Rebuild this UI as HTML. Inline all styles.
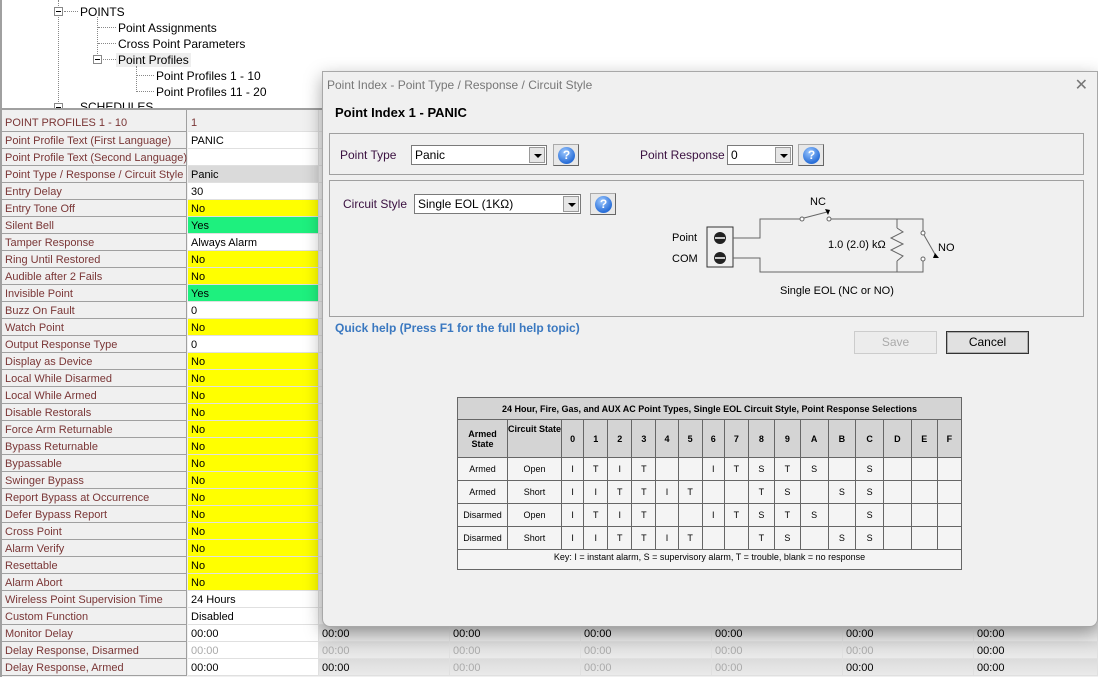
<!DOCTYPE html>
<html><head><meta charset="utf-8">
<style>
*{box-sizing:border-box;margin:0;padding:0}
body{width:1098px;height:677px;position:relative;overflow:hidden;background:#fff;font-family:"Liberation Sans",Arial,sans-serif;font-size:11px;color:#000}
.t{position:absolute;font-size:12px;white-space:nowrap}
.dot{position:absolute;border-color:#888;border-style:dotted;border-width:0}
.pm{position:absolute;width:9px;height:9px;border:1px solid #888;background:#fff}
.pm:after{content:"";position:absolute;left:1px;top:3px;width:5px;height:1px;background:#000}
.grid{position:absolute;left:0;top:108px;width:1098px;height:569px;background:#f0f0f0;border-top:2px solid #a0a0a0;border-left:2px solid #a0a0a0}
.r{position:absolute;left:0;height:17px;width:1098px}
.l{position:absolute;left:2px;top:0;width:185px;height:17px;background:#f0f0f0;border-right:1px solid #a0a0a0;border-bottom:1px solid #a0a0a0;color:#7a3636;padding:3px 0 0 3px;white-space:nowrap}
.v{position:absolute;top:0;height:17px;background:#fff;border-right:1px solid #e0e0e0;border-bottom:1px solid #e0e0e0;padding:3px 0 0 3px;white-space:nowrap}
.y{background:#ffff00}.g{background:#1ef07e}
.dlg{position:absolute;left:322px;top:71px;width:776px;height:556px;background:#f0f0f0;border:1px solid #a8a8a8;border-radius:0 0 8px 8px;box-shadow:0 6px 18px rgba(0,0,0,.35)}
.box{position:absolute;border:1px solid #a0a0a0}
.lab{position:absolute;font-size:12px;color:#3a1040;white-space:nowrap}
.sel{position:absolute;height:20px;background:#fff;border:1px solid #7a7a7a;font-size:12px;padding:2px 0 0 3px}
.sel i{position:absolute;right:1px;top:1px;width:16px;height:16px;background:#e6e6e6;border:1px solid #999}
.sel i:after{content:"";position:absolute;left:4px;top:6px;border:4px solid transparent;border-top:4px solid #000;border-bottom:0}
.hb{position:absolute;width:26px;height:22px;background:#e8e8e8;border:1px solid #aaa;border-bottom-color:#666;border-right-color:#666}
.hb b{position:absolute;left:4px;top:2px;width:17px;height:17px;border-radius:50%;background:radial-gradient(circle at 40% 30%,#9cc8ff,#2a6fd8 70%);color:#fff;font-size:12px;text-align:center;line-height:17px;font-weight:bold}
.btn{position:absolute;height:23px;font-size:12px;text-align:center;line-height:21px;background:#e1e1e1;border:1px solid #adadad}
table{position:absolute;left:457px;top:397px;width:505px;border-collapse:collapse;font-size:9px;background:#f4f4f4}
td{border:1px solid #666;text-align:center;height:23px;padding:0}
th{border:1px solid #666;background:#d4d4d4;font-weight:bold;font-size:9px;padding:0}
</style></head><body>
<div class="dot" style="left:58px;top:0;height:108px;border-left-width:1px"></div>
<div class="pm" style="left:54px;top:7px"></div>
<div class="dot" style="left:64px;top:11px;width:14px;border-top-width:1px"></div>
<div class="t" style="left:80px;top:5px">POINTS</div>
<div class="dot" style="left:97px;top:17px;height:47px;border-left-width:1px"></div>
<div class="dot" style="left:98px;top:27px;width:18px;border-top-width:1px"></div>
<div class="t" style="left:118px;top:21px">Point Assignments</div>
<div class="dot" style="left:98px;top:43px;width:18px;border-top-width:1px"></div>
<div class="t" style="left:118px;top:37px">Cross Point Parameters</div>
<div class="pm" style="left:93px;top:55px"></div>
<div class="dot" style="left:103px;top:59px;width:13px;border-top-width:1px"></div>
<div class="t" style="left:116px;top:53px;background:#eee;padding:0 2px">Point Profiles</div>
<div class="dot" style="left:136px;top:66px;height:26px;border-left-width:1px"></div>
<div class="dot" style="left:137px;top:75px;width:17px;border-top-width:1px"></div>
<div class="t" style="left:156px;top:69px">Point Profiles 1 - 10</div>
<div class="dot" style="left:137px;top:91px;width:17px;border-top-width:1px"></div>
<div class="t" style="left:156px;top:85px">Point Profiles 11 - 20</div>
<div class="pm" style="left:54px;top:103px"></div>
<div class="t" style="left:80px;top:100px">SCHEDULES</div>
<div style="position:absolute;left:0;top:0;width:2px;height:108px;background:#a0a0a0"></div>

<div class="grid"></div>
<div id="rows"></div>
<script>
(function(){
var R=[["POINT PROFILES 1 - 10","1","h"],["Point Profile Text (First Language)","PANIC",""],["Point Profile Text (Second Language)","",""],["Point Type / Response / Circuit Style","Panic","p"],["Entry Delay","30",""],["Entry Tone Off","No","y"],["Silent Bell","Yes","g"],["Tamper Response","Always Alarm",""],["Ring Until Restored","No","y"],["Audible after 2 Fails","No","y"],["Invisible Point","Yes","g"],["Buzz On Fault","0",""],["Watch Point","No","y"],["Output Response Type","0",""],["Display as Device","No","y"],["Local While Disarmed","No","y"],["Local While Armed","No","y"],["Disable Restorals","No","y"],["Force Arm Returnable","No","y"],["Bypass Returnable","No","y"],["Bypassable","No","y"],["Swinger Bypass","No","y"],["Report Bypass at Occurrence","No","y"],["Defer Bypass Report","No","y"],["Cross Point","No","y"],["Alarm Verify","No","y"],["Resettable","No","y"],["Alarm Abort","No","y"],["Wireless Point Supervision Time","24 Hours",""],["Custom Function","Disabled",""],["Monitor Delay","00:00","m"],["Delay Response, Disarmed","00:00","d"],["Delay Response, Armed","00:00","a"]];
var cx=[188,319,450,581,712,843,974,1098];
var pat={m:[0,0,0,0,0,0,0],d:[1,1,1,1,1,1,0],a:[0,0,1,1,1,0,0]};
var h="";
for(var i=0;i<R.length;i++){var tp=i==0?110:115+17*i;var ht=i==0?22:17;
h+='<div class="r" style="top:'+tp+'px;height:'+ht+'px"><div class="l" style="height:'+ht+'px;'+(i==0?'padding-top:7px':'')+'">'+R[i][0]+'</div>';
var k=R[i][2];var n=pat[k]?7:1;
for(var c=0;c<n;c++){var cls="v",st="";
if(k=="y")cls+=" y";if(k=="g")cls+=" g";if(k=="p")st="background:#dadada;";if(k=="h"){st="background:#f0f0f0;color:#7a3636;padding-top:7px;";}
if(pat[k]&&pat[k][c])st+="color:#aaa;";
if(pat[k]&&c>0)st+="background:linear-gradient(#dcdcdc,#eaeaea);";
h+='<div class="'+cls+'" style="left:'+cx[c]+'px;width:'+(cx[c+1]-cx[c])+'px;height:'+ht+'px;'+st+'">'+R[i][1]+'</div>';}
if(!pat[k])h+='<div class="v" style="left:319px;width:779px;height:'+ht+'px;background:#f0f0f0"></div>';
h+='</div>';}
document.getElementById("rows").innerHTML=h;
})();
</script>

<div class="dlg">
 <div style="position:absolute;left:4px;top:6px;font-size:12px;color:#777">Point Index - Point Type / Response / Circuit Style</div>
 <div style="position:absolute;right:9px;top:3px;font-size:16px;color:#777">✕</div>
 <div style="position:absolute;left:12px;top:33px;font-size:13px;font-weight:bold">Point Index 1 - PANIC</div>
 <div class="box" style="left:6px;top:61px;width:755px;height:42px"></div>
 <div class="lab" style="left:17px;top:76px">Point Type</div>
 <div class="sel" style="left:88px;top:73px;width:136px">Panic<i></i></div>
 <div class="hb" style="left:230px;top:72px"><b>?</b></div>
 <div class="lab" style="left:317px;top:76px">Point Response</div>
 <div class="sel" style="left:404px;top:73px;width:66px">0<i></i></div>
 <div class="hb" style="left:475px;top:72px"><b>?</b></div>
 <div class="box" style="left:6px;top:108px;width:755px;height:137px"></div>
 <div class="lab" style="left:20px;top:125px">Circuit Style</div>
 <div class="sel" style="left:91px;top:122px;width:167px">Single EOL (1KΩ)<i></i></div>
 <div class="hb" style="left:267px;top:121px"><b>?</b></div>
 <svg style="position:absolute;left:327px;top:108px" width="320" height="125" font-family="Liberation Sans,Arial" font-size="11">
  <text x="22" y="61">Point</text><text x="22" y="82">COM</text>
  <rect x="57" y="47" width="26" height="40" fill="none" stroke="#333"/>
  <circle cx="70" cy="58" r="6" fill="#222"/><circle cx="70" cy="78" r="6" fill="#222"/>
  <line x1="65" y1="58" x2="75" y2="58" stroke="#fff" stroke-width="1.5"/><line x1="65" y1="78" x2="75" y2="78" stroke="#fff" stroke-width="1.5"/>
  <g stroke="#666" fill="none" stroke-width="1">
   <polyline points="83,58 110,58 110,39 150,39"/>
   <polyline points="83,78 110,78 110,92 273,92 273,81"/>
   <polyline points="181,39 273,39 273,51"/>
   <line x1="154" y1="38" x2="177" y2="32"/>
   <line x1="247" y1="39" x2="247" y2="48"/><line x1="247" y1="81" x2="247" y2="92"/>
   <polyline points="247,48 253,52 241,58 253,64 241,70 253,76 247,81"/>
   <line x1="274" y1="55" x2="286" y2="76"/>
   <circle cx="152" cy="39" r="2" fill="#fff"/><circle cx="179" cy="39" r="2" fill="#fff"/>
   <circle cx="273" cy="53" r="2" fill="#fff"/><circle cx="273" cy="79" r="2" fill="#fff"/>
  </g>
  <polygon points="175,29 180,30 178,35" fill="#000"/><polygon points="285,73 289,78 283,78" fill="#000"/>
  <text x="160" y="25">NC</text><text x="288" y="71">NO</text>
  <text x="178" y="68">1.0 (2.0) kΩ</text>
  <text x="130" y="114">Single EOL (NC or NO)</text>
 </svg>
 <div style="position:absolute;left:12px;top:249px;font-size:12px;font-weight:bold;color:#3a78c0">Quick help (Press F1 for the full help topic)</div>
 <div class="btn" style="left:531px;top:259px;width:83px;color:#aaa;background:#ececec;border-color:#ccc">Save</div>
 <div class="btn" style="left:623px;top:259px;width:83px;border:1px solid #333;box-shadow:inset 0 0 0 1px #adadad">Cancel</div>
</div>

<table>
<tr><th colspan="18" style="height:22px">24 Hour, Fire, Gas, and AUX AC Point Types, Single EOL Circuit Style, Point Response Selections</th></tr>
<tr style="height:38px"><th style="width:50px">Armed<br>State</th><th style="width:54px;vertical-align:top;padding-top:4px">Circuit State</th><th>0</th><th>1</th><th>2</th><th>3</th><th>4</th><th>5</th><th>6</th><th>7</th><th>8</th><th>9</th><th>A</th><th>B</th><th>C</th><th>D</th><th>E</th><th>F</th></tr>
<tr><td>Armed</td><td>Open</td><td>I</td><td>T</td><td>I</td><td>T</td><td></td><td></td><td>I</td><td>T</td><td>S</td><td>T</td><td>S</td><td></td><td>S</td><td></td><td></td><td></td></tr>
<tr><td>Armed</td><td>Short</td><td>I</td><td>I</td><td>T</td><td>T</td><td>I</td><td>T</td><td></td><td></td><td>T</td><td>S</td><td></td><td>S</td><td>S</td><td></td><td></td><td></td></tr>
<tr><td>Disarmed</td><td>Open</td><td>I</td><td>T</td><td>I</td><td>T</td><td></td><td></td><td>I</td><td>T</td><td>S</td><td>T</td><td>S</td><td></td><td>S</td><td></td><td></td><td></td></tr>
<tr><td>Disarmed</td><td>Short</td><td>I</td><td>I</td><td>T</td><td>T</td><td>I</td><td>T</td><td></td><td></td><td>T</td><td>S</td><td></td><td>S</td><td>S</td><td></td><td></td><td></td></tr>
<tr><td colspan="18" style="height:20px;vertical-align:top;padding-top:2px">Key: I = instant alarm, S = supervisory alarm, T = trouble, blank = no response</td></tr>
</table>
</body></html>
